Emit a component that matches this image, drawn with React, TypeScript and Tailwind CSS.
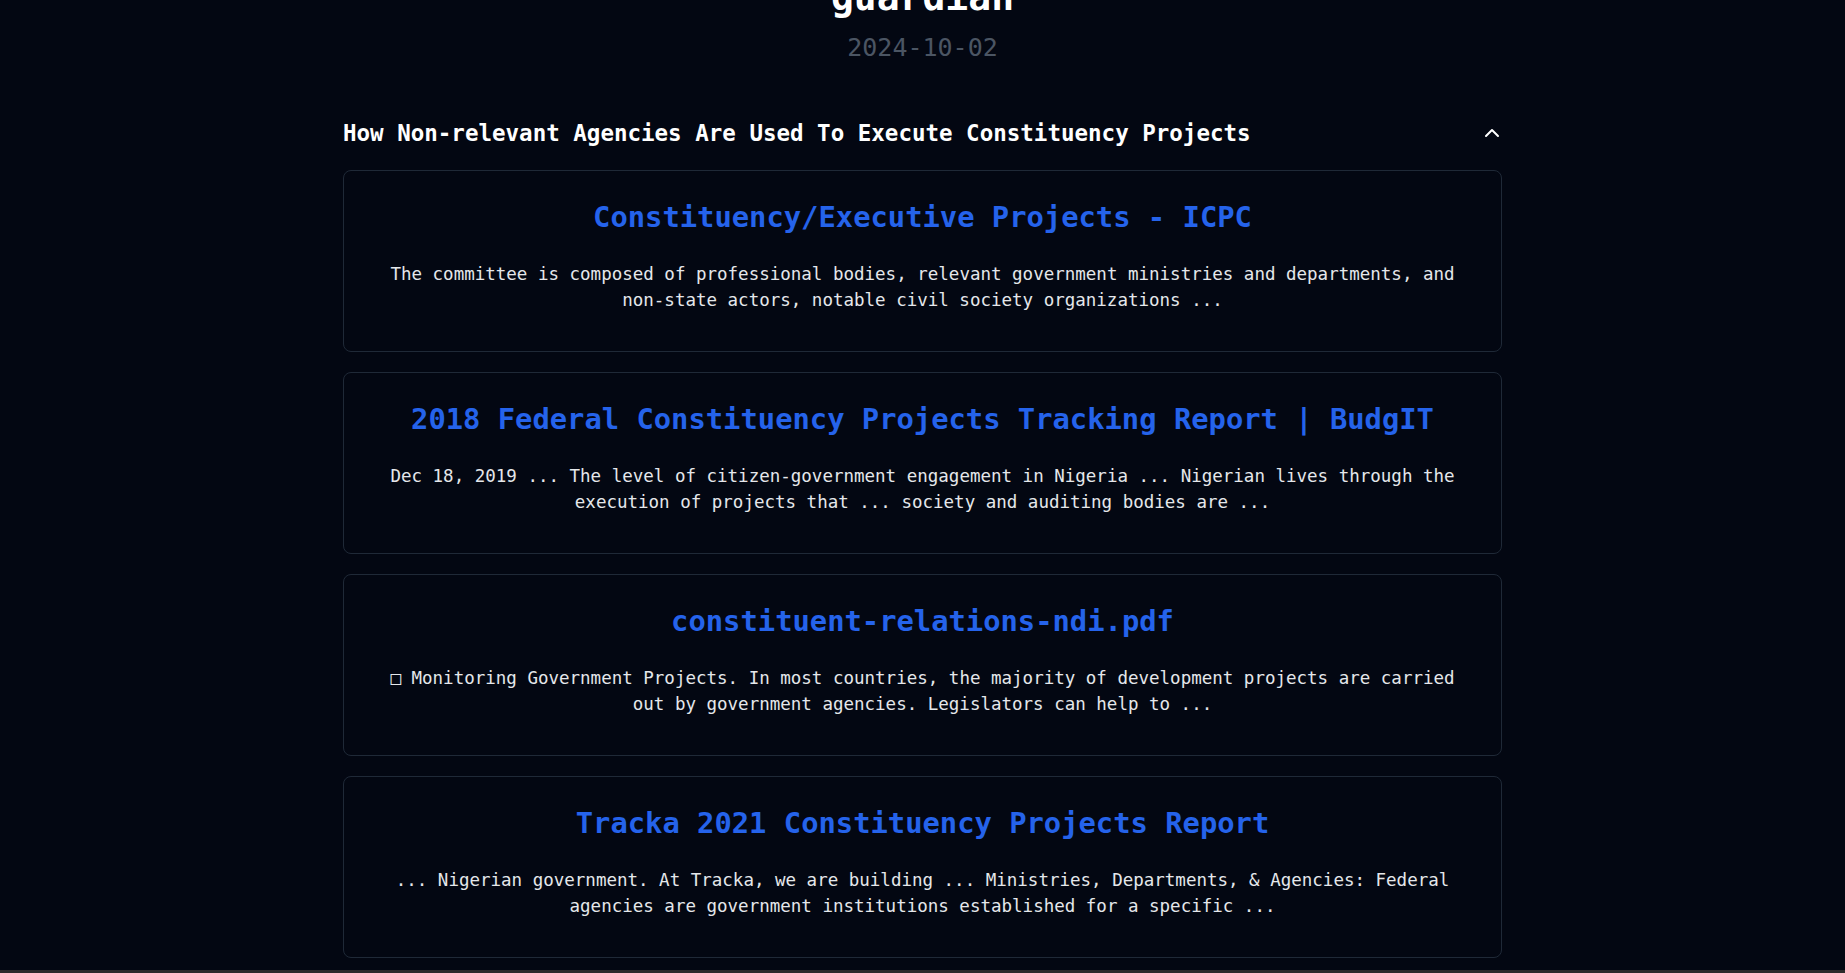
import React from "react";
import { ChevronUp } from "lucide-react";

const RESULTS = [
  {
    title: "Constituency/Executive Projects - ICPC",
    snippet:
      "The committee is composed of professional bodies, relevant government ministries and departments, and non-state actors, notable civil society organizations ...",
  },
  {
    title: "2018 Federal Constituency Projects Tracking Report | BudgIT",
    snippet:
      "Dec 18, 2019 ... The level of citizen-government engagement in Nigeria ... Nigerian lives through the execution of projects that ... society and auditing bodies are ...",
  },
  {
    title: "constituent-relations-ndi.pdf",
    snippet:
      "□ Monitoring Government Projects. In most countries, the majority of development projects are carried out by government agencies. Legislators can help to ...",
  },
  {
    title: "Tracka 2021 Constituency Projects Report",
    snippet:
      "... Nigerian government. At Tracka, we are building ... Ministries, Departments, & Agencies: Federal agencies are government institutions established for a specific ...",
  },
];

export default function App() {
  return (
    <div className="h-[973px] flex flex-col bg-[#030712] text-white overflow-hidden font-['DejaVu_Sans_Mono',monospace]">
      <div className="flex-1 overflow-hidden">
        <div className="w-[1159px] mx-auto -mt-[26px]">
          {/* Source header */}
          <h1 className="text-center text-[38px] leading-[46px] font-bold">guardian</h1>
          <p className="mt-[9px] text-center text-[25px] leading-[38px] text-[#4b5563]">2024-10-02</p>

          {/* Question */}
          <div className="mt-[52px] h-[28px] flex items-center justify-between">
            <h2 className="text-[22.5px] leading-[28px] font-bold">
              How Non-relevant Agencies Are Used To Execute Constituency Projects
            </h2>
            <ChevronUp className="w-6 h-6 -mr-[2px] text-white" strokeWidth={2} />
          </div>

          {/* Results */}
          <div className="mt-[23px] flex flex-col gap-5">
            {RESULTS.map((r) => (
              <div
                key={r.title}
                className="rounded-lg border border-[#1f2937] px-[40px] pt-[28px] pb-[38px] text-center"
              >
                <a className="block text-[28.8px] leading-[36px] font-bold text-[#2563eb]">{r.title}</a>
                <p className="mt-[26px] text-[17.5px] leading-[26px] text-[#e5e7eb]">{r.snippet}</p>
              </div>
            ))}
          </div>
        </div>
      </div>
      <div className="h-[3px] bg-[#2b2b2b]" />
    </div>
  );
}
